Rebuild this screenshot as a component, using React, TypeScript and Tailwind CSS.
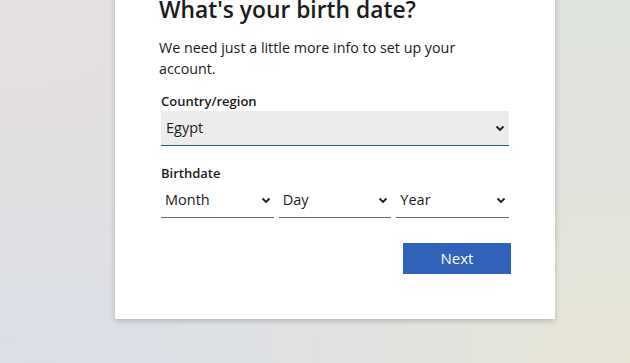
import { useState } from "react";

const font = { fontFamily: '"Segoe UI", "Open Sans", "Liberation Sans", sans-serif' };

function Chevron() {
  return (
    <svg width="10" height="7" viewBox="0 0 10 7" className="shrink-0">
      <polyline points="1.5,1.5 5,5 8.5,1.5" fill="none" stroke="#1b1b1b" strokeWidth="1.8" />
    </svg>
  );
}

function DateSelect({ label }: { label: string }) {
  return (
    <div className="flex h-[35px] flex-1 items-center justify-between border-b border-[#666] pl-[4px] pr-[3px]">
      <span className="text-[14.5px] text-[#1b1b1b]">{label}</span>
      <Chevron />
    </div>
  );
}

export default function App() {
  const [country] = useState("Egypt");

  return (
    <div
      className="flex h-[363px] w-[630px] justify-center overflow-hidden bg-[#e1e1e1] bg-[radial-gradient(at_0%_0%,#e5dfe0,transparent_65%),radial-gradient(at_100%_0%,#dfe4dc,transparent_65%),radial-gradient(at_0%_100%,#dadfe8,transparent_65%),radial-gradient(at_100%_100%,#e8e6d7,transparent_65%)] pl-[40px]"
      style={font}
    >
      <div className="mt-[-12px] h-[331px] w-[440px] shrink-0 bg-white px-[44px] pt-[6px] shadow-[0_2px_6px_rgba(0,0,0,0.2)]">
        <h1 className="text-[22.8px] leading-[32px] font-semibold text-[#1b1b1b]">What's your birth date?</h1>
        <p className="mt-[11px] w-[320px] text-[14.3px] leading-[21px] text-[#1b1b1b]">
          We need just a little more info to set up your account.
        </p>

        <div className="mt-[13px] px-[2px]">
          <div className="text-[13px] leading-[18px] font-semibold text-[#1b1b1b]">Country/region</div>
          <div className="mt-[1px] flex h-[35px] items-center justify-between border-b border-[#2f5597] bg-[#ececec] pl-[5px] pr-[4px]">
            <span className="text-[14.5px] text-[#1b1b1b]">{country}</span>
            <Chevron />
          </div>

          <div className="mt-[18px] text-[13px] leading-[18px] font-semibold text-[#1b1b1b]">Birthdate</div>
          <div className="mt-[1px] flex gap-[5px]">
            <DateSelect label="Month" />
            <DateSelect label="Day" />
            <DateSelect label="Year" />
          </div>
        </div>

        <div className="mt-[25px] flex justify-end">
          <button className="h-[31px] w-[108px] bg-[#2f62b8] text-[15px] text-white">Next</button>
        </div>
      </div>
    </div>
  );
}
